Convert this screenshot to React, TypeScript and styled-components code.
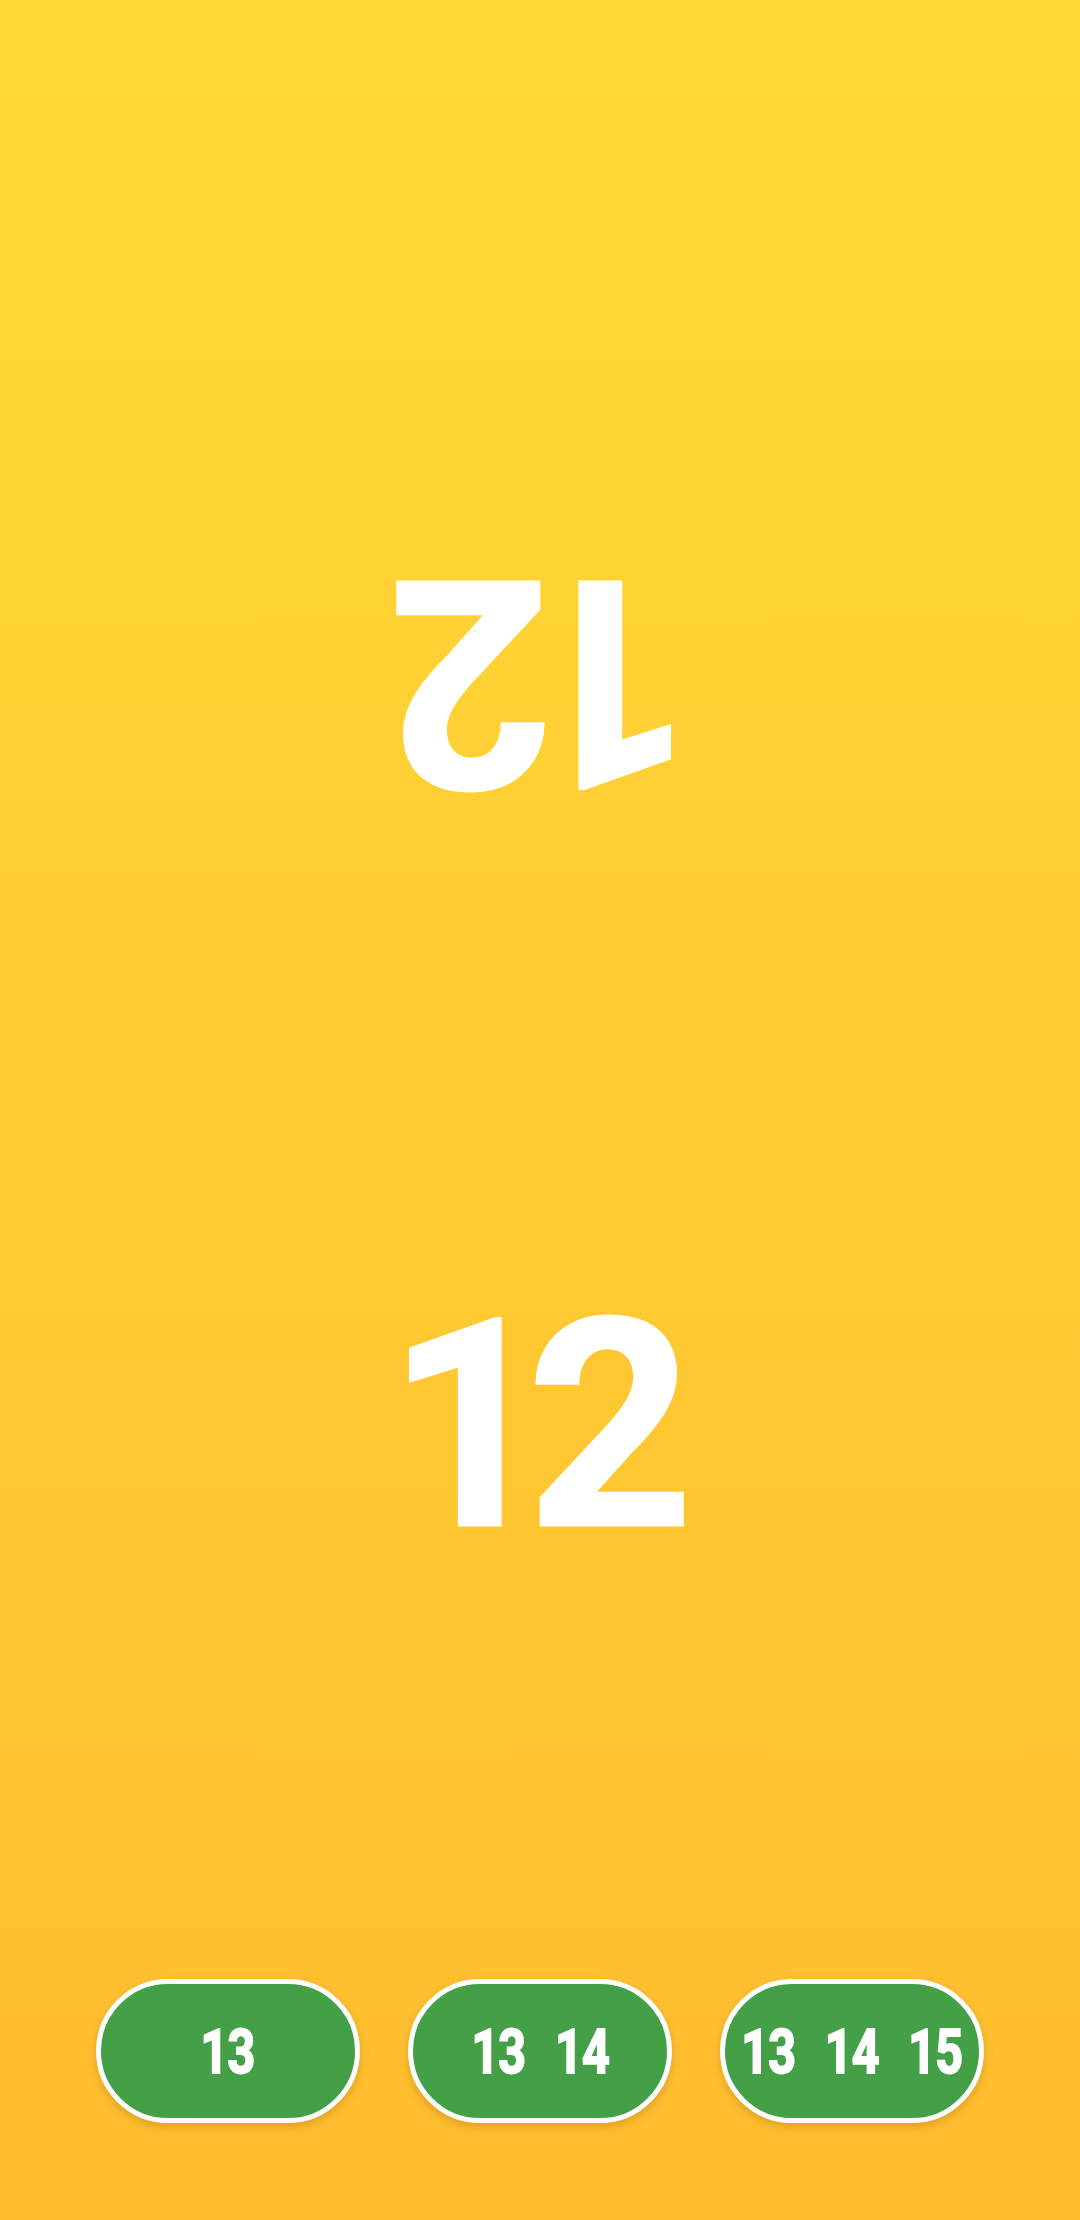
import React from "react";
import styled, { createGlobalStyle } from "styled-components";

const GlobalStyle = createGlobalStyle`
  html, body {
    margin: 0;
    padding: 0;
  }

  body {
    font-family: Roboto, "Liberation Sans", sans-serif;
  }
`;

const App = () => {
  const score = 12;
  const options = [[13], [13, 14], [13, 14, 15]];

  return (
    <>
      <GlobalStyle />
      <Page>
        <Score $flipped>{score}</Score>
        <Score>{score}</Score>
        <ButtonRow>
          {options.map((nums, i) => (
            <ChoiceButton key={`choice_${i}`} type="button">
              <Label>
                {nums.map((n) => (
                  <span key={n}>{n}</span>
                ))}
              </Label>
            </ChoiceButton>
          ))}
        </ButtonRow>
      </Page>
    </>
  );
};

const Page = styled.div`
  display: flex;
  flex-direction: column;
  min-height: 100vh;
  background: linear-gradient(180deg, #ffda36 0%, #ffbd2f 100%);
  overflow: hidden;
`;

const Score = styled.div<{ $flipped?: boolean }>`
  margin-top: ${(p) => (p.$flipped ? "536px" : "455px")};
  height: 290px;
  font-size: 290px;
  line-height: 1;
  font-weight: 700;
  letter-spacing: -26px;
  text-indent: -26px;
  text-align: center;
  color: #fff;
  -webkit-text-stroke: 3px #fff;
  transform: ${(p) => (p.$flipped ? "rotate(180deg)" : "none")};
`;

const ButtonRow = styled.div`
  margin-top: auto;
  padding-bottom: 97px;
  display: flex;
  justify-content: center;
  gap: 48px;
`;

const ChoiceButton = styled.button`
  width: 264px;
  height: 144px;
  box-sizing: border-box;
  border: 5px solid #fff;
  border-radius: 72px;
  background: #43a047;
  box-shadow: 0 4px 10px rgba(150, 90, 0, 0.3);
  display: flex;
  align-items: center;
  justify-content: center;
  padding: 0;
  cursor: pointer;
`;

const Label = styled.span`
  display: inline-flex;
  gap: 38px;
  font-family: Roboto, "Liberation Sans", sans-serif;
  font-size: 62px;
  font-weight: 700;
  letter-spacing: -1px;
  color: #fff;
  -webkit-text-stroke: 2px #fff;
  transform: scaleX(0.78);
`;

export default App;
